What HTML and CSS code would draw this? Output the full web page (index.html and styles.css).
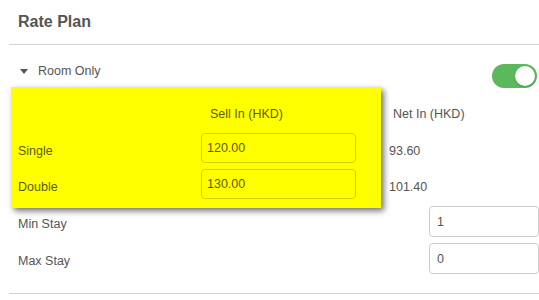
FILE: index.html
```html
<!DOCTYPE html>
<html>
<head>
  <link rel="stylesheet" href="styles.css">
</head>
<body>

<div class="panel">
  <div class="panel-head">Rate Plan</div>

  <div class="plan-row">
    <div class="plan-name">
      <svg class="caret" width="8" height="5" viewBox="0 0 8 5"><polygon points="0,0 8,0 4,5" fill="#555"/></svg>
      Room Only
    </div>
    <div class="switch"><span class="knob"></span></div>
  </div>

  <div class="rates">
    <div class="highlight">
      <div></div>
      <div class="col-head sell-head">Sell In (HKD)</div>
      <div class="lbl">Single</div>
      <input class="price" type="text" value="120.00">
      <div class="lbl">Double</div>
      <input class="price" type="text" value="130.00">
    </div>
    <div class="net">
      <div class="col-head net-head">Net In (HKD)</div>
      <div class="lbl">93.60</div>
      <div class="lbl">101.40</div>
    </div>
  </div>

  <div class="stay">
    <div class="stay-row">
      <div class="lbl">Min Stay</div>
      <input class="stay-input" type="text" value="1">
    </div>
    <div class="stay-row">
      <div class="lbl">Max Stay</div>
      <input class="stay-input" type="text" value="0">
    </div>
  </div>
</div>

</body>
</html>
```

FILE: styles.css
```css
body {
  margin: 0;
  font-family: "Liberation Sans", Arial, sans-serif;
  font-size: 12.5px;
  color: #555;
  background: #fff;
}

.panel {
  margin-left: 9px;
  width: 530px;
}

.panel-head {
  box-sizing: border-box;
  height: 45px;
  padding: 12px 0 0 9px;
  font-size: 16px;
  font-weight: bold;
  line-height: 20px;
  border-bottom: 1px solid #d2d2d2;
}

.plan-row {
  display: flex;
  justify-content: space-between;
  height: 42px;
  padding-left: 11px;
}

.plan-name {
  display: flex;
  align-items: center;
  margin-top: 16px;
  height: 20px;
  line-height: 20px;
}

.caret {
  margin-right: 10px;
}

.switch {
  position: relative;
  width: 45px;
  height: 24px;
  margin: 19px 2px 0 0;
  border-radius: 12px;
  background: #5cb85c;
}

.knob {
  position: absolute;
  top: 2px;
  right: 2px;
  width: 20px;
  height: 20px;
  border-radius: 50%;
  background: #fff;
  box-shadow: 0 1px 2px rgba(0, 0, 0, 0.2);
}

.rates {
  display: flex;
}

.highlight {
  position: relative;
  z-index: 1;
  box-sizing: border-box;
  width: 370px;
  margin: 0 0 -2px 2px;
  padding: 0 25px 9px 7px;
  display: grid;
  grid-template-columns: 183px 155px;
  grid-template-rows: 40px 30px 30px;
  row-gap: 6px;
  background: #ffff00;
  color: #5b5b00;
  box-shadow: 3px 3px 6px rgba(0, 0, 0, 0.55);
}

.net {
  margin-left: 8px;
  display: grid;
  grid-template-rows: 40px 30px 30px;
  row-gap: 6px;
}

.col-head {
  padding-top: 17px;
  line-height: 20px;
}

.sell-head {
  padding-left: 9px;
}

.net-head {
  padding-left: 4px;
}

.lbl {
  padding-top: 9px;
  line-height: 18px;
}

input {
  box-sizing: border-box;
  margin: 0;
  font-family: "Liberation Sans", Arial, sans-serif;
  font-size: 12.5px;
  color: #555;
  border: 1px solid #ccc;
  border-radius: 4px;
  background: #fff;
  outline: none;
}

.price {
  width: 155px;
  height: 30px;
  padding: 0 5px;
  background: #ffff00;
  border-color: #d0d000;
  color: #5b5b00;
}

.stay {
  display: grid;
  row-gap: 6px;
  padding: 0 0 19px 9px;
  border-bottom: 1px solid #d2d2d2;
}

.stay-row {
  display: flex;
  justify-content: space-between;
}

.stay-input {
  width: 110px;
  height: 31px;
  padding: 0 7px;
}
```
